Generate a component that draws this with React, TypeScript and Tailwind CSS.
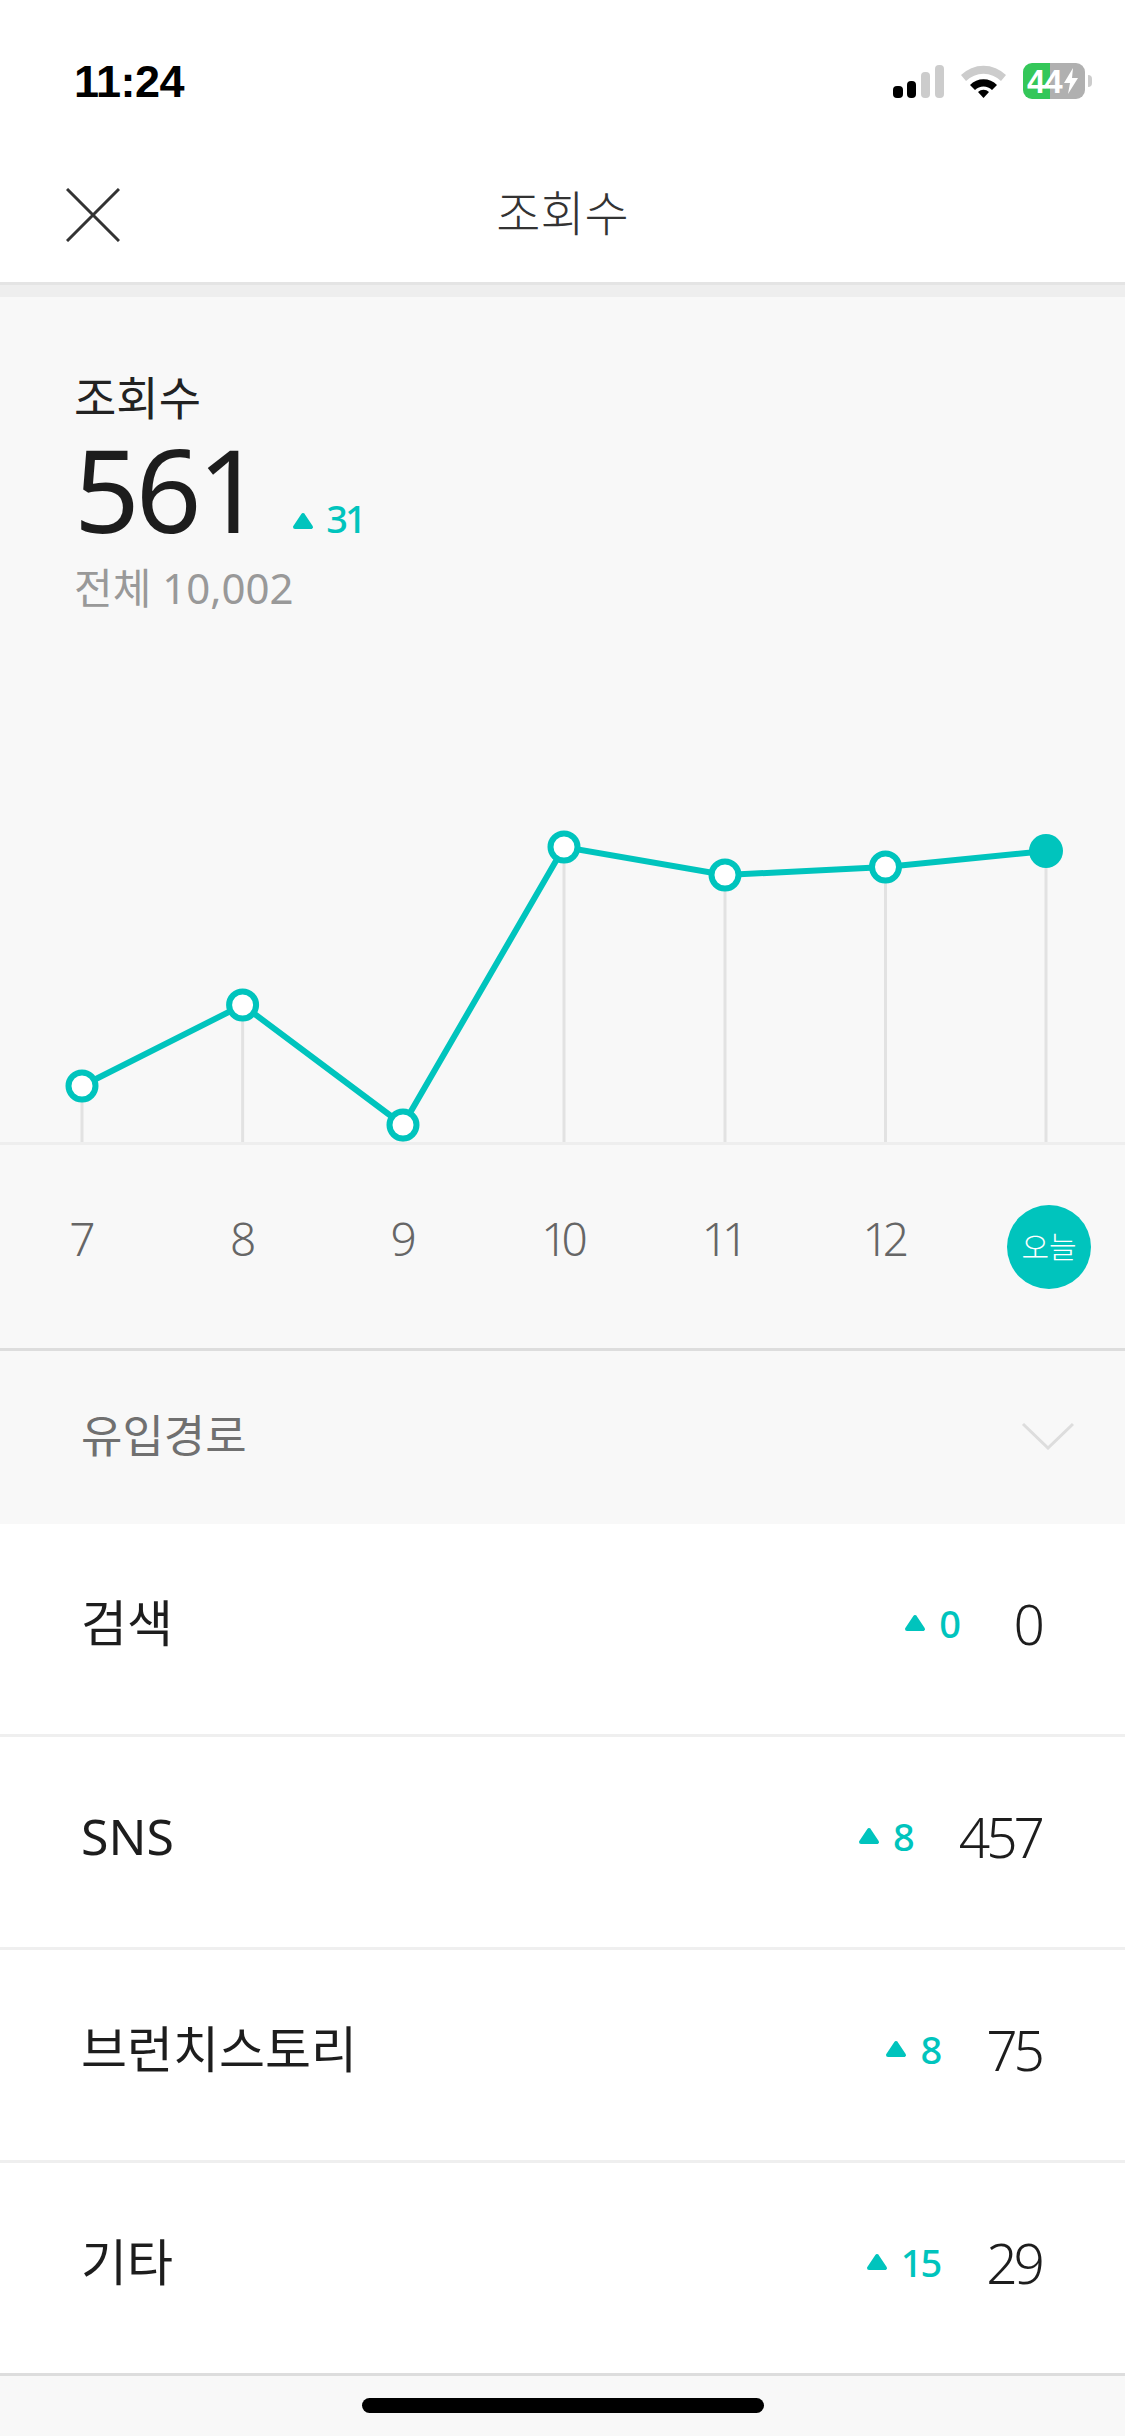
const TEAL = "#00c4bd"

const points = [
  [82, 1086],
  [242.6, 1005],
  [403, 1125],
  [564, 847],
  [725, 875],
  [885.5, 867],
  [1046, 851],
]

const days = ["7", "8", "9", "10", "11", "12"]

const rows = [
  { name: "검색", delta: "0", total: "0" },
  { name: "SNS", delta: "8", total: "457" },
  { name: "브런치스토리", delta: "8", total: "75" },
  { name: "기타", delta: "15", total: "29" },
]

function StatusBar() {
  return (
    <div className="flex h-[150px] items-start justify-between pt-[57px] pl-[74px] pr-[33px]">
      <span className="font-['Liberation_Sans',sans-serif] text-[45px] leading-[50px] font-bold tracking-[-0.5px] text-black">11:24</span>
      <div className="flex items-center pt-[6px]">
        <svg width="52" height="33" viewBox="0 0 52 33" className="mr-[16px]">
          <rect x="0" y="21" width="10" height="12" rx="4" fill="#000" />
          <rect x="14" y="16" width="9" height="17" rx="4" fill="#000" />
          <rect x="28" y="7" width="9" height="26" rx="4" fill="#ccc" />
          <rect x="42" y="0" width="9" height="33" rx="4" fill="#ccc" />
        </svg>
        <svg width="46" height="33" viewBox="0 0 46 33" className="mr-[16px]">
          <path d="M0 10 A32 32 0 0 1 45 10 L40 16 A25 25 0 0 0 5 16 Z" fill="#ccc" />
          <path d="M9 20 A19 19 0 0 1 36 20 L31 25 A12 12 0 0 0 14 25 Z" fill="#000" />
          <path d="M17 27 A8 8 0 0 1 28 27 L22.5 33 Z" fill="#000" />
        </svg>
        <div className="flex h-[36px] w-[62px] items-center rounded-[9px] bg-[linear-gradient(90deg,#34c759_43%,#b0b0b0_43%)] pl-[4px]">
          <span className="font-['Liberation_Sans',sans-serif] text-[33px] leading-none font-bold tracking-[-1px] text-white">44</span>
          <svg width="14" height="26" viewBox="0 0 14 26" className="ml-[2px]">
            <path d="M9 0 L0 15 H6 L4 26 L14 10 H8 Z" fill="#fff" />
          </svg>
        </div>
        <div className="ml-[3px] h-[12px] w-[4px] rounded-r-full bg-[#ccc]" />
      </div>
    </div>
  )
}

function Triangle({ className }: { className: string }) {
  return (
    <svg width="22" height="18" viewBox="0 0 22 18" className={className}>
      <path d="M11 3 L19 15 H3 Z" fill={TEAL} stroke={TEAL} strokeWidth="4" strokeLinejoin="round" />
    </svg>
  )
}

function Chart() {
  const line = points.map((p) => p.join(",")).join(" ")
  return (
    <svg width="1125" height="342" viewBox="0 800 1125 342" className="block">
      {points.map(([x, y]) => (
        <line key={x} x1={x} y1={y} x2={x} y2={1142} stroke="#e2e2e2" strokeWidth="3" />
      ))}
      <polyline points={line} fill="none" stroke={TEAL} strokeWidth="6" />
      {points.slice(0, 6).map(([x, y]) => (
        <circle key={x} cx={x} cy={y} r="13.5" fill="#fff" stroke={TEAL} strokeWidth="6" />
      ))}
      <circle cx={1046} cy={851} r="17" fill={TEAL} />
    </svg>
  )
}

export default function App() {
  return (
    <div className="h-[2436px] w-[1125px] overflow-hidden bg-[#f8f8f8] font-['Noto_Sans','Noto_Sans_CJK_KR',sans-serif] font-light">
      <header className="h-[282px] bg-white">
        <StatusBar />
        <div className="relative flex h-[132px] items-center justify-center pb-[6px]">
          <svg width="54" height="54" viewBox="0 0 54 54" className="absolute top-[38px] left-[66px]">
            <path d="M1 1 L53 53 M53 1 L1 53" stroke="#333" strokeWidth="3" />
          </svg>
          <span className="text-[48px] leading-none text-[#333]">조회수</span>
        </div>
      </header>
      <div className="h-[15px] border-t-[3px] border-[#e4e4e4] bg-[#eeeeee]" />

      <section>
        <div className="h-[503px] pt-[75px] pl-[74px]">
          <p className="text-[46px] leading-[50px] font-normal text-[#222]">조회수</p>
          <div className="flex items-baseline">
            <span className="text-[115px] leading-[134px] font-normal tracking-[-4px] text-[#1d1d1d]">561</span>
            <Triangle className="ml-[33px] -translate-y-[3px]" />
            <span className="ml-[12px] text-[38px] leading-none font-medium tracking-[-3px] text-[#00c4bd]">31</span>
          </div>
          <p className="mt-[5px] text-[42px] leading-[54px] font-normal text-[#999]">전체 10,002</p>
        </div>
        <Chart />
        <div className="flex h-[209px] items-center border-t-[3px] border-b-[3px] border-t-[#eeeeee] border-b-[#dddddd] pl-[2px]">
          {days.map((d) => (
            <span key={d} className="w-[160.7px] pr-[6px] pb-[18px] text-center text-[46px] leading-none tracking-[-6px] text-[#666]">
              {d}
            </span>
          ))}
          <span className="ml-[41px] flex h-[84px] w-[84px] items-center justify-center rounded-full bg-[#00c4bd] text-[30px] leading-none text-white">
            오늘
          </span>
        </div>
      </section>

      <div className="flex h-[173px] items-center justify-between pr-[50px] pb-[4px] pl-[81px]">
        <span className="text-[45px] leading-none font-normal text-[#707070]">유입경로</span>
        <svg width="54" height="28" viewBox="0 0 54 28">
          <path d="M2 2 L27 26 L52 2" fill="none" stroke="#ddd" strokeWidth="3" />
        </svg>
      </div>

      <ul className="bg-white">
        {rows.map((r) => (
          <li key={r.name} className="flex h-[213px] items-center border-b-[3px] border-[#efefef] pr-[84px] pb-[12px] pl-[81px] last:border-[#dddddd]">
            <span className="flex-1 text-[50px] leading-none font-normal text-[#1d1d1d]">{r.name}</span>
            <Triangle className="mr-[13px]" />
            <span className="mr-[46px] text-[38px] leading-none font-medium tracking-[-2px] text-[#00c4bd]">{r.delta}</span>
            <span className="min-w-[36px] text-right text-[55px] leading-none tracking-[-4px] text-[#1d1d1d]">{r.total}</span>
          </li>
        ))}
      </ul>

      <div className="mx-auto mt-[22px] h-[15px] w-[402px] rounded-full bg-black" />
    </div>
  )
}
